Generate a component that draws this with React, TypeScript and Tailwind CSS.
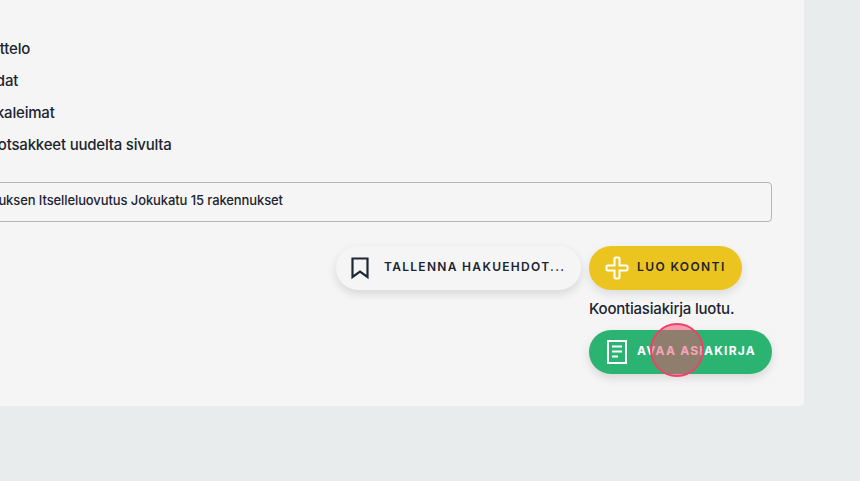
const rows: [string, string][] = [
  ["ml-[-74px]", "Sisällysluettelo"],
  ["ml-[-33px]", "Liitedat"],
  ["ml-[-67px]", "Taulukkokaleimat"],
  ["ml-[-48px]", "Toista otsakkeet uudelta sivulta"],
];

function BookmarkIcon() {
  return (
    <svg width="18" height="22" viewBox="0 0 18 22" fill="none" stroke="#1f2933" strokeWidth="2.2">
      <path d="M1.5 1.5h15v18.5l-7.5-5.5-7.5 5.5z" />
    </svg>
  );
}

function PlusIcon() {
  return (
    <svg width="24" height="24" viewBox="0 0 24 24" fill="none" stroke="#fff" strokeWidth="2">
      <path d="M9.5 2.5a1 1 0 0 1 1-1h3a1 1 0 0 1 1 1v7h7a1 1 0 0 1 1 1v3a1 1 0 0 1-1 1h-7v7a1 1 0 0 1-1 1h-3a1 1 0 0 1-1-1v-7h-7a1 1 0 0 1-1-1v-3a1 1 0 0 1 1-1h7z" />
    </svg>
  );
}

function DocIcon() {
  return (
    <svg width="20" height="24" viewBox="0 0 20 24" fill="none" stroke="#fff" strokeWidth="2">
      <rect x="1" y="1" width="18" height="22" />
      <path d="M5 6.5h10M5 11.5h10M5 16.5h6" />
    </svg>
  );
}

export default function App() {
  return (
    <div className="h-[481px] w-[860px] overflow-hidden bg-[#e8ecec] font-['Inter',sans-serif] text-[#1c2430]">
      <div className="w-[804px] overflow-hidden rounded-br bg-[#f5f5f5] pb-8 pr-8 pt-8">
        <div className="flex flex-col">
          {rows.map(([margin, text]) => (
            <div key={text} className={`h-8 whitespace-nowrap text-[15px] font-medium leading-[34px] tracking-[-0.2px] ${margin}`}>
              {text}
            </div>
          ))}
        </div>
        <div className="ml-[-60px] mt-[22px] flex h-10 items-center whitespace-nowrap rounded border border-[#b5b5b5] pb-0.5 pl-3 text-[13px] font-medium tracking-[-0.1px]">
          Rakennuksen Itselleluovutus Jokukatu 15 rakennukset
        </div>
        <div className="mt-6 flex justify-end gap-2">
          <button className="flex h-11 w-[245px] items-center gap-[15px] rounded-full bg-[#f5f5f5] pl-[15px] text-[12px] font-semibold tracking-[1.3px] shadow-[0_4px_10px_rgba(0,0,0,0.12)]">
            <BookmarkIcon />
            <span className="whitespace-nowrap pb-0.5">TALLENNA HAKUEHDOT...</span>
          </button>
          <div className="flex w-[183px] flex-col items-start">
            <button className="flex h-11 w-[153px] items-center gap-[8px] rounded-full bg-[#ecc41f] pl-[16px] text-[12px] font-semibold tracking-[1.4px] shadow-[0_4px_10px_rgba(0,0,0,0.1)]">
              <PlusIcon />
              <span className="whitespace-nowrap pb-0.5">LUO KOONTI</span>
            </button>
            <div className="flex h-10 items-center pb-0.5 text-[15px] font-medium tracking-[-0.2px]">Koontiasiakirja luotu.</div>
            <div className="relative">
              <button className="flex h-11 w-[183px] items-center gap-[10px] rounded-full bg-[#2bb371] pl-[18px] text-[12px] font-bold tracking-[1.25px] text-white shadow-[0_4px_10px_rgba(0,0,0,0.12)]">
                <DocIcon />
                <span className="whitespace-nowrap pb-0.5">AVAA ASIAKIRJA</span>
              </button>
              <div className="absolute left-[61px] top-[-7px] h-[54px] w-[54px] rounded-full border-[2.5px] border-[#f23f66] bg-[#f4476c]/50" />
            </div>
          </div>
        </div>
      </div>
    </div>
  );
}
